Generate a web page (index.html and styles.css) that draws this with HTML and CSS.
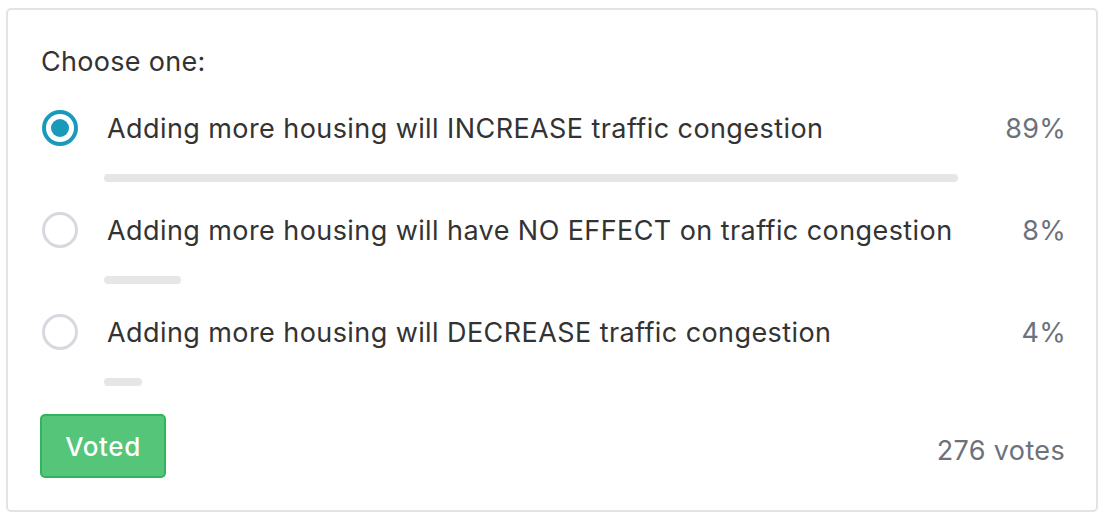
FILE: index.html
```html
<!DOCTYPE html>
<html>
<head>
<meta charset="utf-8">
<link rel="stylesheet" href="styles.css">
</head>
<body>
<div class="card">
  <div class="title">Choose one:</div>
  <div class="option">
    <div class="row">
      <span class="radio checked"></span>
      <span class="label">Adding more housing will INCREASE traffic congestion</span>
      <span class="pct">89%</span>
    </div>
    <div class="track"><div class="bar" style="width:89%"></div></div>
  </div>
  <div class="option">
    <div class="row">
      <span class="radio"></span>
      <span class="label">Adding more housing will have NO EFFECT on traffic congestion</span>
      <span class="pct">8%</span>
    </div>
    <div class="track"><div class="bar" style="width:8%"></div></div>
  </div>
  <div class="option">
    <div class="row">
      <span class="radio"></span>
      <span class="label">Adding more housing will DECREASE traffic congestion</span>
      <span class="pct">4%</span>
    </div>
    <div class="track"><div class="bar" style="width:4%"></div></div>
  </div>
  <div class="footer">
    <button class="btn">Voted</button>
    <span class="votes">276 votes</span>
  </div>
</div>
</body>
</html>
```

FILE: styles.css
```css
html, body {
  margin: 0;
  padding: 0;
  background: #fff;
}
body {
  font-family: "Inter", "Helvetica Neue", Arial, sans-serif;
  color: #333;
  padding: 8px 8px 0 6px;
}
.card {
  width: 1092px;
  height: 504px;
  box-sizing: border-box;
  border: 2px solid #e3e3e3;
  border-radius: 5px;
  padding: 34px 32px 32px 32px;
}
.title {
  font-size: 27px;
  letter-spacing: 0.3px;
  line-height: 36px;
  margin-left: 1px;
  margin-bottom: 30px;
}
.option {
  margin-bottom: 30px;
}
.row {
  display: flex;
  align-items: center;
  height: 36px;
}
.radio {
  width: 36px;
  height: 36px;
  box-sizing: border-box;
  border: 3px solid #d6d9dd;
  border-radius: 50%;
  flex: none;
  margin-left: 2px;
  position: relative;
}
.radio.checked {
  border: 4px solid #1a9aba;
}
.radio.checked::after {
  content: "";
  position: absolute;
  left: 5px;
  top: 5px;
  width: 18px;
  height: 18px;
  border-radius: 50%;
  background: #1a9aba;
}
.label {
  font-size: 27px;
  letter-spacing: 0.42px;
  margin-left: 29px;
  flex: 1;
  white-space: nowrap;
}
.pct {
  font-size: 27px;
  letter-spacing: 0.3px;
  color: #6b727c;
  margin-right: -2px;
}
.track {
  margin-top: 28px;
  margin-left: 64px;
  height: 8px;
}
.bar {
  height: 8px;
  border-radius: 4px;
  background: #e6e6e6;
}
.footer {
  display: flex;
  justify-content: space-between;
  align-items: center;
  margin-top: -2px;
}
.btn {
  font-family: inherit;
  font-size: 26px;
  font-weight: 500;
  letter-spacing: 0.6px;
  color: #fff;
  background: #55c57a;
  border: 2px solid #2fb65c;
  border-radius: 5px;
  width: 126px;
  height: 64px;
  padding: 0;
}
.votes {
  font-size: 27px;
  letter-spacing: 0.35px;
  color: #6b727c;
  margin-top: 8px;
  margin-right: -1px;
}
```
